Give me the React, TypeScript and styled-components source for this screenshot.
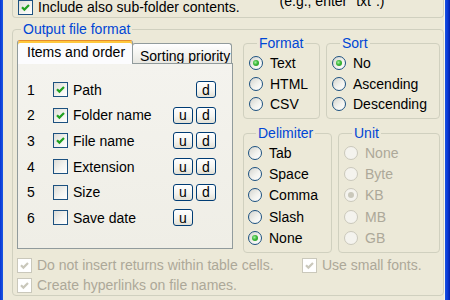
import styled, { createGlobalStyle } from 'styled-components'

const Global = createGlobalStyle`
  html, body {
    margin: 0;
    padding: 0;
    height: 300px;
    overflow: hidden;
    background: #ECE9D8;
  }
  body {
    font-family: "Liberation Sans", Arial, sans-serif;
    font-size: 14px;
    color: #000;
  }
`

const Window = styled.div`
  display: flex;
  width: 450px;
  height: 300px;
  overflow: hidden;
  background: #ECE9D8;
`

const FrameLeft = styled.div`
  flex: none;
  width: 3px;
  background: linear-gradient(90deg, #0A35D2, #1A58E4);
`

const FrameRight = styled.div`
  flex: none;
  width: 5px;
  background: linear-gradient(90deg, #1652E2, #0B3AD6 50%, #0021A8);
`

const Client = styled.div`
  flex: 1;
  display: flex;
  flex-direction: column;
  padding-left: 9px;
  border-right: 1px solid #F7F6F0;
  min-width: 0;
`

const PrevGroup = styled.div`
  box-sizing: border-box;
  margin-top: -10px;
  height: 28px;
  border: 1px solid #D0D0BF;
  border-top: none;
  border-radius: 0 0 4px 4px;
  display: flex;
  align-items: flex-start;
  padding: 7px 0 0 5px;
`

const Hint = styled.span`
  margin-left: 40px;
  margin-top: -4px;
  line-height: 16px;
`

const Group = styled.fieldset<{ $w?: number; $h?: number; $pad?: string }>`
  box-sizing: border-box;
  margin: 0;
  padding: ${p => p.$pad ?? '0'};
  min-width: 0;
  border: 1px solid #D0D0BF;
  border-radius: 4px;
  ${p => (p.$w ? `width: ${p.$w}px; flex: none;` : '')}
  ${p => (p.$h ? `height: ${p.$h}px;` : '')}
`

const Legend = styled.legend`
  color: #0046D5;
  padding: 0 2px;
  margin-left: 8px;
  line-height: 14px;
  font-size: 14px;
`

const OutputBody = styled.div`
  display: flex;
  flex-direction: column;
`

const TopRow = styled.div`
  display: flex;
  padding: 0 3px 0 4px;
  gap: 10px;
`

const TabColumn = styled.div`
  flex: none;
  width: 216px;
  margin-top: 4px;
  display: flex;
  flex-direction: column;
`

const TabStrip = styled.div`
  display: flex;
  align-items: flex-end;
  height: 23px;
`

const Tab = styled.div<{ $active?: boolean; $w: number }>`
  box-sizing: border-box;
  width: ${p => p.$w}px;
  border: 1px solid #919B9C;
  border-bottom: none;
  border-radius: 3px 3px 0 0;
  line-height: 14px;
  white-space: nowrap;
  overflow: hidden;
  ${p =>
    p.$active
      ? `
    position: relative;
    z-index: 1;
    height: 24px;
    margin-bottom: -1px;
    border-top: 1px solid #E68B2C;
    box-shadow: inset 0 2px 0 #FFC83C;
    background: #FCFCFE;
    padding: 4px 0 0 9px;
  `
      : `
    height: 20px;
    margin-left: -1px;
    background: linear-gradient(#FFFFFF, #F3F3EF 55%, #E8E7E1);
    padding: 5px 0 0 7px;
  `}
`

const Panel = styled.div`
  box-sizing: border-box;
  height: 186px;
  border: 1px solid #919B9C;
  background: linear-gradient(#F4F3EE, #EFEEE6);
  padding: 13px 16px 0 9px;
  display: flex;
  flex-direction: column;
`

const ItemRow = styled.div`
  display: flex;
  align-items: center;
  height: 25.6px;
`

const Num = styled.span`
  flex: none;
  width: 26px;
`

const ItemLabel = styled.span`
  flex: 1;
  margin-left: 5px;
  white-space: nowrap;
`

const Buttons = styled.div`
  flex: none;
  display: flex;
  gap: 3px;
`

const MiniButton = styled.button`
  box-sizing: border-box;
  width: 20px;
  height: 17px;
  padding: 0;
  border: 1px solid #003C74;
  border-radius: 3px;
  background: linear-gradient(#FFFFFF, #F4F4F0 55%, #E2E0D6);
  font-family: "Liberation Sans", Arial, sans-serif;
  font-size: 14px;
  line-height: 14px;
  color: #000;
`

const Slot = styled.span`
  width: 20px;
`

const RightColumn = styled.div`
  flex: none;
  width: 197px;
  display: flex;
  flex-direction: column;
  gap: 7px;
`

const GroupRow = styled.div`
  display: flex;
  gap: 6px;
`

const OptionRow = styled.div<{ $h: number; $disabled?: boolean }>`
  display: flex;
  align-items: center;
  height: ${p => p.$h}px;
  gap: 7px;
  white-space: nowrap;
  color: ${p => (p.$disabled ? '#ACA899' : '#000')};
`

const RadioCircle = styled.span<{ $disabled?: boolean }>`
  box-sizing: border-box;
  flex: none;
  width: 14px;
  height: 14px;
  border-radius: 50%;
  border: 1px solid ${p => (p.$disabled ? '#CAC8BB' : '#1C5180')};
  background: ${p =>
    p.$disabled ? '#F4F3EE' : 'linear-gradient(135deg, #D4D4CE 0%, #F2F2EE 55%, #FFFFFF 100%)'};
  display: flex;
  align-items: center;
  justify-content: center;
`

const Dot = styled.span<{ $disabled?: boolean }>`
  width: 6px;
  height: 6px;
  border-radius: 50%;
  background: ${p =>
    p.$disabled ? '#CAC8BB' : 'radial-gradient(circle at 40% 40%, #A2F0A0 0%, #3CB83A 45%, #1D8F1C 100%)'};
`

const CheckBox = styled.span<{ $disabled?: boolean }>`
  box-sizing: border-box;
  flex: none;
  width: 15px;
  height: 15px;
  border: 1px solid ${p => (p.$disabled ? '#CAC8BB' : '#1C5180')};
  background: ${p =>
    p.$disabled ? '#FFFFFF' : 'linear-gradient(135deg, #DCDCD7 0%, #F3F3EF 55%, #FFFFFF 100%)'};
  display: flex;
  align-items: center;
  justify-content: center;
`

const CheckRow = styled.div<{ $disabled?: boolean }>`
  display: flex;
  align-items: center;
  height: 20px;
  gap: 5px;
  white-space: nowrap;
  color: ${p => (p.$disabled ? '#ACA899' : '#000')};
`

const BottomGrid = styled.div`
  display: grid;
  grid-template-columns: 285px auto;
  padding: 2px 0 0 4px;
`

const Check = ({ checked, disabled }: { checked?: boolean; disabled?: boolean }) => (
  <CheckBox $disabled={disabled}>
    {checked && (
      <svg width="11" height="11" viewBox="0 0 11 11">
        <path
          d="M2 5.2 L4.4 7.6 L9 3"
          fill="none"
          stroke={disabled ? '#CAC8BB' : '#21A121'}
          strokeWidth="2.2"
        />
      </svg>
    )}
  </CheckBox>
)

const Radio = ({ on, disabled }: { on?: boolean; disabled?: boolean }) => (
  <RadioCircle $disabled={disabled}>{on && <Dot $disabled={disabled} />}</RadioCircle>
)

interface IItem {
  label: string
  checked: boolean
  up: boolean
  down: boolean
}

const items: Array<IItem> = [
  { label: 'Path', checked: true, up: false, down: true },
  { label: 'Folder name', checked: true, up: true, down: true },
  { label: 'File name', checked: true, up: true, down: true },
  { label: 'Extension', checked: false, up: true, down: true },
  { label: 'Size', checked: false, up: true, down: true },
  { label: 'Save date', checked: false, up: true, down: false }
]

interface IOptionGroup {
  title: string
  width: number
  options: Array<string>
  selected: string
  disabled?: boolean
}

const OptionGroup = ({ g, h, rowH, pad }: { g: IOptionGroup; h: number; rowH: number; pad: string }) => (
  <Group $w={g.width} $h={h} $pad={pad}>
    <Legend>{g.title}</Legend>
    {g.options.map(o => (
      <OptionRow key={o} $h={rowH} $disabled={g.disabled}>
        <Radio on={o === g.selected} disabled={g.disabled} />
        {o}
      </OptionRow>
    ))}
  </Group>
)

const format: IOptionGroup = { title: 'Format', width: 77, options: ['Text', 'HTML', 'CSV'], selected: 'Text' }
const sort: IOptionGroup = { title: 'Sort', width: 114, options: ['No', 'Ascending', 'Descending'], selected: 'No' }
const delimiter: IOptionGroup = {
  title: 'Delimiter',
  width: 89,
  options: ['Tab', 'Space', 'Comma', 'Slash', 'None'],
  selected: 'None'
}
const unit: IOptionGroup = {
  title: 'Unit',
  width: 102,
  options: ['None', 'Byte', 'KB', 'MB', 'GB'],
  selected: 'KB',
  disabled: true
}

export default function App () {
  return (
    <Window>
      <Global />
      <FrameLeft />
      <Client>
        <PrevGroup>
          <CheckRow>
            <Check checked />
            Include also sub-folder contents.
          </CheckRow>
          <Hint>(e.g., enter "txt".)</Hint>
        </PrevGroup>

        <Group style={{ marginTop: 4 }}>
          <Legend>Output file format</Legend>
          <OutputBody>
            <TopRow>
              <TabColumn>
                <TabStrip>
                  <Tab $active $w={116}>Items and order</Tab>
                  <Tab $w={100}>Sorting priority</Tab>
                </TabStrip>
                <Panel>
                  {items.map((it, i) => (
                    <ItemRow key={it.label}>
                      <Num>{i + 1}</Num>
                      <Check checked={it.checked} />
                      <ItemLabel>{it.label}</ItemLabel>
                      <Buttons>
                        {it.up ? <MiniButton>u</MiniButton> : <Slot />}
                        {it.down ? <MiniButton>d</MiniButton> : <Slot />}
                      </Buttons>
                    </ItemRow>
                  ))}
                </Panel>
              </TabColumn>

              <RightColumn>
                <GroupRow>
                  <OptionGroup g={format} h={83} rowH={20.5} pad="3px 0 0 5px" />
                  <OptionGroup g={sort} h={83} rowH={20.5} pad="3px 0 0 5px" />
                </GroupRow>
                <GroupRow>
                  <OptionGroup g={delimiter} h={127} rowH={21.3} pad="2px 0 0 4px" />
                  <OptionGroup g={unit} h={127} rowH={21.3} pad="2px 0 0 5px" />
                </GroupRow>
              </RightColumn>
            </TopRow>

            <BottomGrid>
              <CheckRow $disabled>
                <Check checked disabled />
                Do not insert returns within table cells.
              </CheckRow>
              <CheckRow $disabled>
                <Check checked disabled />
                Use small fonts.
              </CheckRow>
              <CheckRow $disabled>
                <Check checked disabled />
                Create hyperlinks on file names.
              </CheckRow>
            </BottomGrid>
          </OutputBody>
        </Group>
      </Client>
      <FrameRight />
    </Window>
  )
}
